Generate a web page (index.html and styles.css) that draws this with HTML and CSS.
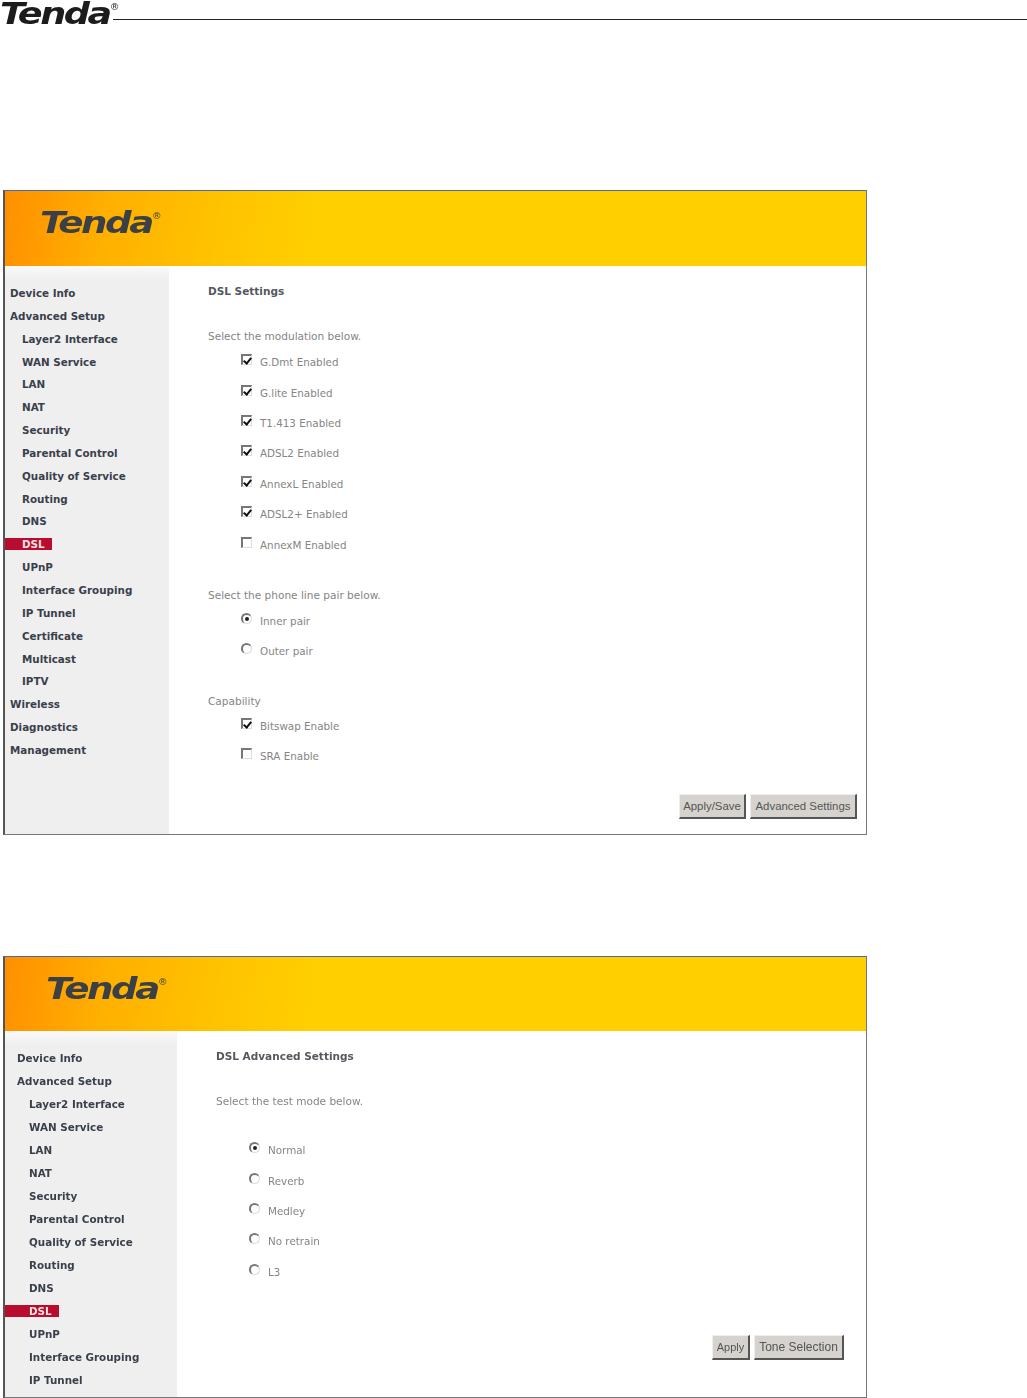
FILE: index.html
```html
<!DOCTYPE html>
<html lang="en">
<head>
  <meta charset="UTF-8" />
  <title>Tenda DSL Settings</title>
  <link rel="stylesheet" href="styles.css">
</head>
<body>

  <!-- Page header -->
  <header class="doc-head">
    <div class="logo logo-doc">Tenda<sup>®</sup></div>
    <div class="doc-line"></div>
  </header>

  <!-- DSL Settings -->
  <section class="screen screen-dsl">
    <div class="banner"><div class="logo logo-banner">Tenda<sup>®</sup></div></div>
    <div class="panel">
      <ul class="menu">
        <li class="top">Device Info</li>
        <li class="top">Advanced Setup</li>
        <li>Layer2 Interface</li>
        <li>WAN Service</li>
        <li>LAN</li>
        <li>NAT</li>
        <li>Security</li>
        <li>Parental Control</li>
        <li>Quality of Service</li>
        <li>Routing</li>
        <li>DNS</li>
        <li class="active"><span>DSL</span></li>
        <li>UPnP</li>
        <li>Interface Grouping</li>
        <li>IP Tunnel</li>
        <li>Certificate</li>
        <li>Multicast</li>
        <li>IPTV</li>
        <li class="top">Wireless</li>
        <li class="top">Diagnostics</li>
        <li class="top">Management</li>
      </ul>
      <div class="content">
        <h2>DSL Settings</h2>
        <p class="note">Select the modulation below.</p>
        <div class="opts">
          <label class="opt"><span class="check on"></span>G.Dmt Enabled</label>
          <label class="opt"><span class="check on"></span>G.lite Enabled</label>
          <label class="opt"><span class="check on"></span>T1.413 Enabled</label>
          <label class="opt"><span class="check on"></span>ADSL2 Enabled</label>
          <label class="opt"><span class="check on"></span>AnnexL Enabled</label>
          <label class="opt"><span class="check on"></span>ADSL2+ Enabled</label>
          <label class="opt"><span class="check"></span>AnnexM Enabled</label>
        </div>
        <p class="note note-pair">Select the phone line pair below.</p>
        <div class="opts">
          <label class="opt"><span class="radio on"></span>Inner pair</label>
          <label class="opt"><span class="radio"></span>Outer pair</label>
        </div>
        <p class="note note-cap">Capability</p>
        <div class="opts">
          <label class="opt"><span class="check on"></span>Bitswap Enable</label>
          <label class="opt"><span class="check"></span>SRA Enable</label>
        </div>
        <div class="actions">
          <button class="btn btn-save">Apply/Save</button>
          <button class="btn btn-adv">Advanced Settings</button>
        </div>
      </div>
    </div>
  </section>

  <!-- DSL Advanced Settings -->
  <section class="screen screen-adv">
    <div class="banner"><div class="logo logo-banner">Tenda<sup>®</sup></div></div>
    <div class="panel">
      <ul class="menu">
        <li class="top">Device Info</li>
        <li class="top">Advanced Setup</li>
        <li>Layer2 Interface</li>
        <li>WAN Service</li>
        <li>LAN</li>
        <li>NAT</li>
        <li>Security</li>
        <li>Parental Control</li>
        <li>Quality of Service</li>
        <li>Routing</li>
        <li>DNS</li>
        <li class="active"><span>DSL</span></li>
        <li>UPnP</li>
        <li>Interface Grouping</li>
        <li>IP Tunnel</li>
      </ul>
      <div class="content">
        <h2>DSL Advanced Settings</h2>
        <p class="note">Select the test mode below.</p>
        <div class="opts">
          <label class="opt"><span class="radio on"></span>Normal</label>
          <label class="opt"><span class="radio"></span>Reverb</label>
          <label class="opt"><span class="radio"></span>Medley</label>
          <label class="opt"><span class="radio"></span>No retrain</label>
          <label class="opt"><span class="radio"></span>L3</label>
        </div>
        <div class="actions">
          <button class="btn btn-apply">Apply</button>
          <button class="btn btn-tone">Tone Selection</button>
        </div>
      </div>
    </div>
  </section>

</body>
</html>
```

FILE: styles.css
```css
/* RESET */
* {
  margin: 0;
  padding: 0;
  box-sizing: border-box;
}

html, body {
  height: 100%;
  overflow: hidden;
  background: #fff;
  font-family: 'DejaVu Sans', sans-serif;
}

/* Page header */
.doc-head {
  display: flex;
  height: 190px;
  align-items: flex-start;
}

.doc-line {
  flex: 1;
  height: 1px;
  margin-top: 19px;
  margin-left: 1px;
  background: #222;
}

.logo {
  font-family: 'DejaVu Sans', sans-serif;
  font-weight: 700;
  font-style: italic;
  white-space: nowrap;
  letter-spacing: -2px;
  transform-origin: left top;
}

.logo sup {
  font-size: 8px;
  font-style: normal;
  font-weight: 400;
  letter-spacing: 0;
  vertical-align: 14px;
  line-height: 0;
}

.logo-doc {
  width: 112px;
  height: 26px;
  padding-top: 2px;
  font-size: 30px;
  line-height: 24px;
  color: #1c1c1c;
  transform: scaleX(1.22);
}

/* Screenshot frame */
.screen {
  width: 864px;
  margin-left: 3px;
  border-top: 1px solid #4a68ad;
  border-left: 2px solid #555;
  border-right: 1px solid #777;
  border-bottom: 1px solid #777;
  filter: blur(0.45px);
}

.screen-adv {
  height: 442px;
  margin-top: 121px;
  overflow: hidden;
}

.banner {
  height: 75px;
  padding: 15px 0 0 35px;
  background: linear-gradient(100deg, #ff8f00 0%, #ffb000 12%, #ffc400 26%, #ffcf00 36%, #ffcf00 100%);
}

.screen-adv .banner {
  height: 74px;
  padding-left: 41px;
}

.logo-banner {
  font-size: 31px;
  line-height: 32px;
  color: #3b3f46;
  transform: scaleX(1.2);
}

.panel {
  display: flex;
  height: 568px;
  background: #fff;
}

.screen-adv .panel {
  height: 366px;
}

/* Left menu */
.menu {
  width: 164px;
  flex: none;
  padding-top: 16px;
  list-style: none;
  background: linear-gradient(180deg, #fafafa 0, #efefef 14px);
  font-size: 10.35px;
  line-height: 22.85px;
  font-weight: 700;
  color: #3a3f4c;
  white-space: nowrap;
}

.menu li {
  padding-left: 17px;
}

.menu li.top {
  padding-left: 5px;
}

.menu li.active {
  padding-left: 0;
}

.menu li.active span {
  display: block;
  width: 47px;
  height: 12px;
  margin-top: 5px;
  margin-bottom: 5.85px;
  padding-left: 17px;
  background: #b80d2e;
  color: #f4e4e4;
  line-height: 12px;
}

.screen-adv .menu {
  width: 172px;
  line-height: 23px;
}

.screen-adv .menu li {
  padding-left: 24px;
}

.screen-adv .menu li.top {
  padding-left: 12px;
}

.screen-adv .menu li.active {
  padding-left: 0;
}

.screen-adv .menu li.active span {
  width: 54px;
  margin-bottom: 6px;
  padding-left: 24px;
}

/* Main content */
.content {
  flex: 1;
  padding: 17px 9px 0 39px;
  color: #858585;
}

h2 {
  height: 16px;
  font-size: 10.5px;
  line-height: 16px;
  font-weight: 700;
  color: #55585e;
}

.note {
  height: 16px;
  margin-top: 29px;
  font-size: 10.55px;
  line-height: 16px;
}

.note-pair {
  margin-top: 27px;
}

.note-cap {
  height: 15px;
  margin-top: 26px;
}

.opts {
  padding-top: 3px;
}

.screen-adv .opts {
  padding-top: 26px;
}

.opt {
  display: flex;
  align-items: center;
  height: 30.4px;
  padding-left: 33px;
  font-size: 10.35px;
}

.check, .radio {
  display: block;
  flex: none;
  position: relative;
  width: 11px;
  height: 11px;
  margin-right: 8px;
  margin-top: -5px;
  background: #fff;
  border-top: 2px solid #777;
  border-left: 2px solid #777;
  border-right: 1px solid #ddd;
  border-bottom: 1px solid #ddd;
}

.radio {
  border-radius: 50%;
}

.check.on::after {
  content: "";
  position: absolute;
  left: 2px;
  top: 0;
  width: 3px;
  height: 6px;
  border-right: 2px solid #111;
  border-bottom: 2px solid #111;
  transform: rotate(40deg);
}

.radio.on::after {
  content: "";
  position: absolute;
  left: 2px;
  top: 2px;
  width: 4px;
  height: 4px;
  border-radius: 50%;
  background: #222;
}

/* Buttons */
.actions {
  display: flex;
  justify-content: flex-end;
  gap: 4px;
  margin-top: 23px;
}

.screen-adv .actions {
  margin-top: 48px;
  padding-right: 13px;
}

.btn {
  height: 25px;
  background: #d6d3ce;
  border-top: 1px solid #eee;
  border-left: 1px solid #eee;
  border-right: 2px solid #555;
  border-bottom: 2px solid #555;
  font-family: 'Liberation Sans', sans-serif;
  font-size: 11.4px;
  color: #555;
}

.btn-save { width: 67px; }
.btn-adv { width: 107px; }
.btn-apply { width: 38px; font-size: 11px; }
.btn-tone { width: 90px; font-size: 12px; }
```
